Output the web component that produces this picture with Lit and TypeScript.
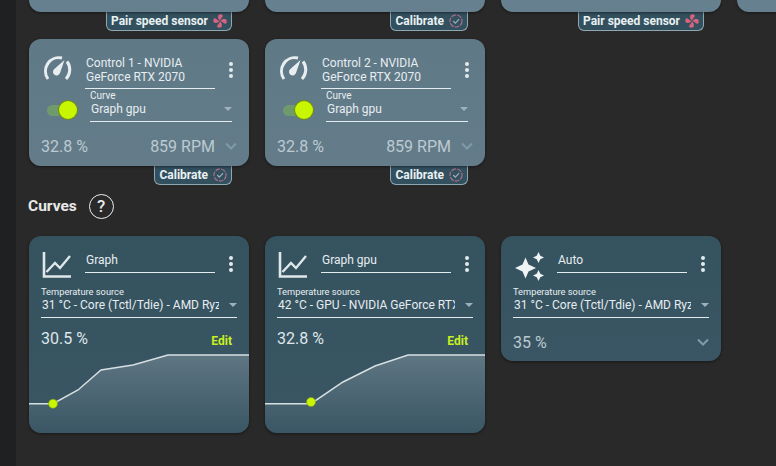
import { LitElement, html, css, svg } from "lit";
import { customElement } from "lit/decorators.js";

const kebab = html`<svg class="kebab" width="6" height="18" viewBox="0 0 6 18"><circle cx="3" cy="3" r="2"/><circle cx="3" cy="9" r="2"/><circle cx="3" cy="15" r="2"/></svg>`;
const arrow = html`<svg class="arrow" width="8" height="4" viewBox="0 0 8 4"><path d="M0 0h8L4 4z"/></svg>`;
const chevron = html`<svg class="chev" width="12" height="8" viewBox="0 0 12 8"><path d="M1 1.500 6 6.500l5-5" fill="none" stroke-width="2"/></svg>`;
const gauge = html`<svg width="30" height="26" viewBox="0 0 30 26" fill="none"><path d="M6 24A13.500 13.500 0 0 1 20 3" stroke="#e8eeef" stroke-width="3"/><path d="M25 6.500A13.500 13.500 0 0 1 24 24" stroke="#e8eeef" stroke-width="3"/><path d="M22.500 5 18 18a3.600 3.600 0 1 1-6.200-3.400z" fill="#e8eeef"/></svg>`;
const chart = html`<svg width="30" height="26" viewBox="0 0 30 26" fill="none" stroke="#dfe7ea"><path d="M2 0v24.500h27" stroke-width="2.600"/><path d="M4.500 20 13 11l5 5L28 4" stroke-width="2.400"/></svg>`;
const sparkle = html`<svg width="32" height="30" viewBox="0 0 32 30" fill="#eef3f4"><path d="M11.500 5.500 14.500 12.500 22 16 14.500 19.500 11.500 26.500 8.500 19.500 1 16 8.500 12.500z"/><path d="M24.500 0 26.300 3.700 30 5.500 26.300 7.300 24.500 11 22.700 7.300 19 5.500 22.700 3.700z"/><path d="M24.500 18 26.300 21.700 30 23.500 26.300 25.300 24.500 29 22.700 25.300 19 23.500 22.700 21.700z"/></svg>`;
const fan = html`<svg width="14" height="14" viewBox="0 0 15 15" fill="#d8637f"><path d="M7.500 7C5.500 6 5 3 5.800 1 6.500 0 9.700 0 10.500 1.300 10.800 3.300 8.600 4 7.500 7zM8 7.500C9 5.500 12 5 14 5.800 15 6.500 15 9.700 13.700 10.500 11.700 10.800 11 8.600 8 7.500zM7.500 8C9.500 9 10 12 9.200 14 8.500 15 5.300 15 4.500 13.700 4.200 11.700 6.400 11 7.500 8zM7 7.500C6 9.500 3 10 1 9.200 0 8.500 0 5.300 1.300 4.500 3.300 4.200 4 6.400 7 7.500z"/></svg>`;
const calib = html`<svg width="14" height="14" viewBox="0 0 15 15" fill="none"><circle cx="7.500" cy="7.500" r="6.500" stroke="#a86f8a" stroke-width="1.300" stroke-dasharray="5 1.200"/><path d="M4.500 7.500 6.800 9.800 10.800 5.500" stroke="#9db1bb" stroke-width="1.200"/></svg>`;

const tile = (label: string, icon: unknown) => html`<div class="chip">${label}${icon}</div>`;

const stub = (kind: "pair" | "cal") => html`<div class="slot">
  <div class="card control stub"></div>
  ${kind === "pair" ? tile("Pair speed sensor", fan) : tile("Calibrate", calib)}
</div>`;

const control = (name: string) => html`<div class="slot">
  <div class="card control">
    <div class="head two">
      <div class="icon">${gauge}</div>
      <div class="title">${name}</div>
      ${kebab}
    </div>
    <div class="ctl">
      <div class="toggle"><span class="track"></span><span class="knob"></span></div>
      <div class="select narrow">
        <div class="lab">Curve</div>
        <div class="val"><span>Graph gpu</span>${arrow}</div>
      </div>
    </div>
    <div class="foot">
      <span class="pct">32.8 %</span>
      <span class="rpm">859 RPM</span>
      ${chevron}
    </div>
  </div>
  ${tile("Calibrate", calib)}
</div>`;

const plot = (pts: string, dot: [number, number]) => svg`<svg class="plot" width="220" height="83" viewBox="0 0 220 83">
  <defs><linearGradient id="fade" x1="0" y1="0" x2="0" y2="1"><stop offset="0" stop-color="#5f7683"/><stop offset="1" stop-color="#5f7683" stop-opacity="0"/></linearGradient></defs>
  <path d="M${pts} L220 83 L0 83Z" fill="url(#fade)"/>
  <path d="M${pts}" fill="none" stroke="#d6dfe2" stroke-width="1.500"/>
  <circle cx=${dot[0]} cy=${dot[1]} r="4.500" fill="#c8f500" stroke="#7f9c10" stroke-width=".6"/>
</svg>`;

const curve = (name: string, icon: unknown, src: string, pct: string, pts: string | null, dot: [number, number]) => html`<div class="card curve">
  <div class="head">
    <div class="icon">${icon}</div>
    <div class="title">${name}</div>
    ${kebab}
  </div>
  <div class="select wide">
    <div class="lab">Temperature source</div>
    <div class="val"><span class="clip">${src}</span>${arrow}</div>
  </div>
  ${pts
    ? html`<div class="foot chartfoot"><span class="pct bright">${pct}</span><span class="edit">Edit</span></div>${plot(pts, dot)}`
    : html`<div class="foot autofoot"><span class="pct">${pct}</span><span class="grow"></span>${chevron}</div>`}
</div>`;

@customElement("app-root")
export class AppRoot extends LitElement {
  static styles = css`
    :host { display: flex; width: 776px; height: 466px; overflow: hidden; background: #292929; font-family: Roboto, "Liberation Sans", sans-serif; }
    .side { width: 16px; flex: none; background: #1f2021; }
    .main { flex: 1; padding-left: 13px; min-width: 0; overflow: hidden; }
    .row { display: flex; gap: 16px; width: 760px; }
    .row.top { height: 39px; }
    .slot { display: flex; flex-direction: column; width: 220px; flex: none; }
    .card { width: 220px; box-sizing: border-box; border-radius: 12px; box-shadow: 0 1px 3px rgba(0,0,0,.45); position: relative; z-index: 1; }
    .control { background: linear-gradient(#5f7987, #647c8a); height: 127px; padding: 12px; }
    .stub { height: 12px; padding: 0; border-radius: 0 0 12px 12px; background: #668090; }
    .curve { background: linear-gradient(#35525f, #3a5664); padding: 12px 0 0; overflow: hidden; }
    .chip { align-self: flex-end; margin-right: 17px; height: 19px; box-sizing: border-box; display: flex; align-items: center; gap: 5px; padding: 0 4px 1px 4px; background: #33505f; border: 1px solid #8ea7b3; border-top: none; border-radius: 0 0 6px 6px; color: #e9f0f2; font-size: 12px; font-weight: 700; white-space: nowrap; }
    .head { display: flex; align-items: flex-start; height: 25px; padding: 0 12px; }
    .control .head { height: 38px; padding: 0; }
    .icon { width: 44px; flex: none; padding: 4px 0 0 1px; box-sizing: border-box; height: 30px; }
    .title { width: 130px; box-sizing: border-box; height: 25px; padding: 5px 0 0 1px; border-bottom: 1px solid #e3ecef; color: #e6edf0; font-size: 12px; line-height: 14px; }
    .two .title { height: 38px; }
    .kebab { fill: #e3eaec; margin: 7px 0 0 13px; flex: none; }
    .two .kebab { margin-top: 10px; }
    .ctl { display: flex; height: 33px; }
    .toggle { width: 49px; flex: none; position: relative; }
    .track { position: absolute; left: 6px; top: 16px; width: 23px; height: 11px; border-radius: 6px; background: #6f9a6c; }
    .knob { position: absolute; left: 18px; top: 12px; width: 18px; height: 18px; border-radius: 50%; background: #c8f500; box-shadow: 0 0 0 1px #6f8e17; }
    .select { box-sizing: border-box; border-bottom: 1px solid #e3ecef; }
    .narrow { width: 142px; height: 33px; padding-top: 1px; }
    .wide { margin: 13px 12px 0; width: 196px; height: 32px; }
    .lab { font-size: 9.300px; line-height: 11px; color: #e8eff1; }
    .narrow .lab { font-size: 10px; }
    .val { display: flex; align-items: center; height: 18px; margin-top: -1px; font-size: 12px; color: #e6edf0; padding-left: 1px; }
    .clip { width: 177px; overflow: hidden; white-space: nowrap; flex: none; }
    .val span:not(.clip) { flex: 1; }
    .arrow { fill: #9fb2bc; margin-left: auto; }
    .foot { display: flex; align-items: center; color: #bccad1; font-size: 16px; }
    .control .foot { margin-top: 14px; height: 20px; }
    .pct { flex: none; }
    .bright { color: #dfe7ea; }
    .rpm { margin-left: auto; }
    .chev { stroke: #7f9baa; margin-left: 10px; }
    .chartfoot { padding: 0 17px 0 12px; margin: 9px 0 1px; height: 22px; }
    .edit { margin-left: auto; color: #c8f01e; font-size: 12px; font-weight: 700; padding-top: 6px; }
    .plot { display: block; }
    .autofoot { padding: 0 12px 9px; margin-top: 14px; height: 20px; }
    .grow { flex: 1; }
    .heading { display: flex; align-items: center; gap: 12px; height: 28px; margin: 7px 0 16px -1px; color: #e9e9e9; font-size: 15.500px; font-weight: 700; }
    .help { width: 25px; height: 25px; box-sizing: border-box; border: 1.500px solid #ececec; border-radius: 50%; display: flex; align-items: center; justify-content: center; font-size: 17px; font-weight: 500; }
    .curves { align-items: flex-start; }
  `;

  render() {
    return html`
      <div class="side"></div>
      <div class="main">
        <div class="row top">
          ${stub("pair")}${stub("cal")}${stub("pair")}${html`<div class="slot"><div class="card control stub"></div></div>`}
        </div>
        <div class="row">
          ${control("Control 1 - NVIDIA GeForce RTX 2070")}
          ${control("Control 2 - NVIDIA GeForce RTX 2070")}
        </div>
        <div class="heading"><span>Curves</span><span class="help">?</span></div>
        <div class="row curves">
          ${curve("Graph", chart, "31 °C - Core (Tctl/Tdie) - AMD Ryz", "30.5 %", "0 53.700 L24 53.700 L49 40 L72 20 L104 15 L139 5 L220 5", [24, 53.7])}
          ${curve("Graph gpu", chart, "42 °C - GPU - NVIDIA GeForce RTX", "32.8 %", "0 53.700 L46 53.700 L78 32 L110 16 L143 5 L220 5", [46, 52])}
          ${curve("Auto", sparkle, "31 °C - Core (Tctl/Tdie) - AMD Ryz", "35 %", null, [0, 0])}
        </div>
      </div>
    `;
  }
}
